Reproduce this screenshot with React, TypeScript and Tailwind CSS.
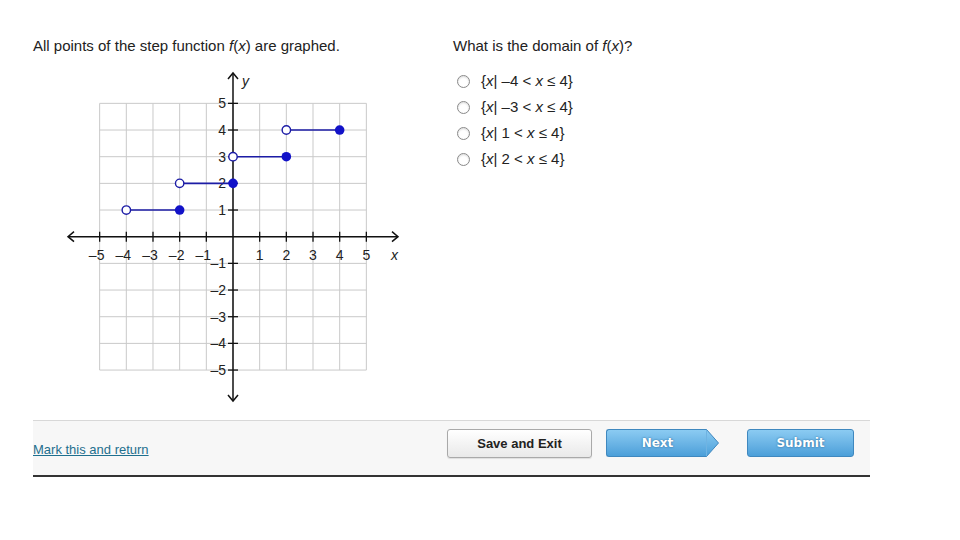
import React from 'react'

const O = { x: 233, y: 236.7 }
const U = 26.67
const X = (u: number) => O.x + u * U
const Y = (v: number) => O.y - v * U
const units = [-5, -4, -3, -2, -1, 1, 2, 3, 4, 5]
const all = [-5, -4, -3, -2, -1, 0, 1, 2, 3, 4, 5]

const steps = [
  { y: 1, from: -4, to: -2 },
  { y: 2, from: -2, to: 0 },
  { y: 3, from: 0, to: 2 },
  { y: 4, from: 2, to: 4 },
]

function Graph() {
  return (
    <svg width="350" height="345" viewBox="60 65 350 345" className="block">
      {all.map((u) => (
        <line key={'gx' + u} x1={X(u)} y1={Y(5)} x2={X(u)} y2={Y(-5)} stroke="#c9c9c9" strokeWidth="1" />
      ))}
      {all.map((v) => (
        <line key={'gy' + v} x1={X(-5)} y1={Y(v)} x2={X(5)} y2={Y(v)} stroke="#c9c9c9" strokeWidth="1" />
      ))}
      {/* axes */}
      <line x1="69" y1={O.y} x2="397" y2={O.y} stroke="#111" strokeWidth="1.5" />
      <line x1={O.x} y1="74" x2={O.x} y2="400" stroke="#111" strokeWidth="1.5" />
      <path d={`M74 ${O.y - 5} L68 ${O.y} L74 ${O.y + 5}`} fill="none" stroke="#111" strokeWidth="1.5" />
      <path d={`M392 ${O.y - 5} L398 ${O.y} L392 ${O.y + 5}`} fill="none" stroke="#111" strokeWidth="1.5" />
      <path d={`M${O.x - 5} 79 L${O.x} 73 L${O.x + 5} 79`} fill="none" stroke="#111" strokeWidth="1.5" />
      <path d={`M${O.x - 5} 395 L${O.x} 401 L${O.x + 5} 395`} fill="none" stroke="#111" strokeWidth="1.5" />
      {units.map((u) => (
        <line key={'tx' + u} x1={X(u)} y1={O.y - 5} x2={X(u)} y2={O.y + 5} stroke="#111" strokeWidth="1.3" />
      ))}
      {units.map((v) => (
        <line key={'ty' + v} x1={O.x - 5} y1={Y(v)} x2={O.x + 5} y2={Y(v)} stroke="#111" strokeWidth="1.3" />
      ))}
      <g fontFamily="Liberation Sans, Arial, sans-serif" fontSize="14" fill="#222">
        {units.map((u) => (
          <text key={'lx' + u} x={X(u) - (u < 0 ? 3 : 0)} y={O.y + 23} textAnchor="middle">
            {u < 0 ? '\u2013' + -u : u}
          </text>
        ))}
        {units.map((v) => (
          <text key={'ly' + v} x={O.x - 7} y={Y(v) + 5} textAnchor="end">
            {v < 0 ? '\u2013' + -v : v}
          </text>
        ))}
        <text x="242" y="86" fontStyle="italic">y</text>
        <text x="391" y={O.y + 23} fontStyle="italic">x</text>
      </g>
      {steps.map((s) => (
        <g key={s.y}>
          <line x1={X(s.from)} y1={Y(s.y)} x2={X(s.to)} y2={Y(s.y)} stroke="#1c1ca6" strokeWidth="1.6" />
          <circle cx={X(s.from)} cy={Y(s.y)} r="4.2" fill="#fff" stroke="#1c1ca6" strokeWidth="1.4" />
          <circle cx={X(s.to)} cy={Y(s.y)} r="4.8" fill="#1212c8" />
        </g>
      ))}
    </svg>
  )
}

const options = ['\u2013' + '4', '\u2013' + '3', '1', '2']

export default function App() {
  return (
    <div className="w-[960px] h-[540px] bg-white font-['Liberation_Sans',Arial,sans-serif] text-[#222] flex flex-col">
      <div className="h-[420px] flex pt-[37px]">
        <div className="w-[420px] pl-[33px]">
          <p className="text-[15px] leading-[17px]">
            All points of the step function <i>f</i>(<i>x</i>) are graphed.
          </p>
          <div className="mt-[11px] ml-[27px]">
            <Graph />
          </div>
        </div>
        <div className="pl-[33px]">
          <p className="text-[15px] leading-[17px]">
            What is the domain of <i>f</i>(<i>x</i>)?
          </p>
          <div className="mt-[14px] flex flex-col ml-[4px]">
            {options.map((o) => (
              <label key={o} className="h-[26px] flex items-center gap-[11px] text-[15px]">
                <span className="w-[13px] h-[13px] rounded-full border border-[#8a8a8a] bg-white shadow-[inset_0_1px_2px_rgba(0,0,0,0.15)]" />
                <span>
                  {'{'}<i>x</i>| {o} &lt; <i>x</i> ≤ 4{'}'}
                </span>
              </label>
            ))}
          </div>
        </div>
      </div>
      <div className="ml-[33px] w-[837px] h-[57px] bg-[#f7f7f7] border-t border-t-[#d8d8d8] border-b-2 border-b-[#333] flex items-start">
        <div className="w-[414px] mt-[16px]">
          <a href="#" className="text-[13px] leading-[18px] text-[#1e6f8e] underline">Mark this and return</a>
        </div>
        <button className="mt-[8px] w-[145px] h-[29px] rounded-[3px] border border-[#a9a9a9] bg-gradient-to-b from-white to-[#e9e9e9] text-[13px] font-bold text-[#222] shadow-[0_1px_1px_rgba(0,0,0,0.1)]">
          Save and Exit
        </button>
        <div className="mt-[8px] ml-[14px] flex h-[28px]">
          <div className="w-[100px] h-[28px] rounded-l-[3px] border border-r-0 border-[#3f88bf] bg-gradient-to-b from-[#8bcbf2] to-[#4b9fd9] flex items-center justify-center pl-[2px] text-[12px] font-bold text-white font-['DejaVu_Sans',Verdana,sans-serif] [text-shadow:0_0_2px_#1f5f8f]">
            Next
          </div>
          <svg width="13" height="28" viewBox="0 0 13 28" className="block">
            <defs>
              <linearGradient id="ng" x1="0" y1="0" x2="0" y2="1">
                <stop offset="0" stopColor="#8bcbf2" />
                <stop offset="1" stopColor="#4b9fd9" />
              </linearGradient>
            </defs>
            <path d="M0 0.5 L0.5 0.5 L12.5 14 L0.5 27.5 L0 27.5 Z" fill="url(#ng)" stroke="#3f88bf" strokeWidth="1" />
            <line x1="0.5" y1="1" x2="0.5" y2="27" stroke="#6fb3e2" strokeWidth="1" />
          </svg>
        </div>
        <button className="mt-[8px] ml-[28px] w-[107px] h-[28px] rounded-[3px] border border-[#3f88bf] bg-gradient-to-b from-[#8bcbf2] to-[#4b9fd9] text-[12px] font-bold text-white font-['DejaVu_Sans',Verdana,sans-serif] [text-shadow:0_0_2px_#1f5f8f]">
          Submit
        </button>
      </div>
    </div>
  )
}
